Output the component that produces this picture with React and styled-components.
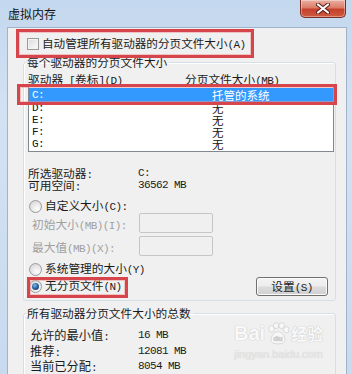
import React from "react";
import styled, { createGlobalStyle } from "styled-components";

const drives = [
  { name: "C:", size: "托管的系统", selected: true },
  { name: "D:", size: "无" },
  { name: "E:", size: "无" },
  { name: "F:", size: "无" },
  { name: "G:", size: "无" },
];

const totals = [
  { label: "允许的最小值", value: "16 MB" },
  { label: "推荐", value: "12081 MB" },
  { label: "当前已分配", value: "8054 MB" },
];

const App = () => {
  return (
    <>
      <GlobalStyle />
      <Window>
        <TitleBar>
          <Title>虚拟内存</Title>
          <CloseButton>
            <svg width="14" height="11" viewBox="0 0 14 11">
              <path d="M2 1.5 L12 9.5 M12 1.5 L2 9.5" stroke="#5a1a14" strokeWidth="4" strokeLinecap="round" />
              <path d="M2 1.5 L12 9.5 M12 1.5 L2 9.5" stroke="#fff" strokeWidth="2.2" strokeLinecap="round" />
            </svg>
          </CloseButton>
        </TitleBar>

        <Panel>
          <CheckRow>
            <CheckBox />
            <span>自动管理所有驱动器的分页文件大小<Lat>(A)</Lat></span>
          </CheckRow>

          <Group>
            <Legend>每个驱动器的分页文件大小</Legend>
            <ListHeader>
              <span>驱动器<Lat> [</Lat>卷标<Lat>](D)</Lat></span>
              <span>分页文件大小<Lat>(MB)</Lat></span>
            </ListHeader>
            <ListBox>
              {drives.map((d) => (
                <ListRow key={d.name} $selected={d.selected}>
                  <Lat>{d.name}</Lat>
                  <span>{d.size}</span>
                </ListRow>
              ))}
            </ListBox>

            <InfoBlock>
              <InfoRow>
                <span>所选驱动器<Lat>:</Lat></span>
                <Lat>C:</Lat>
              </InfoRow>
              <InfoRow>
                <span>可用空间<Lat>:</Lat></span>
                <Lat>36562 MB</Lat>
              </InfoRow>
            </InfoBlock>

            <RadioRow $top={8}>
              <Radio />
              <span>自定义大小<Lat>(C):</Lat></span>
            </RadioRow>
            <FieldRow $top={0}>
              <span>初始大小<Lat>(MB)(I):</Lat></span>
              <SizeInput disabled />
            </FieldRow>
            <FieldRow $top={3}>
              <span>最大值<Lat>(MB)(X):</Lat></span>
              <SizeInput disabled />
            </FieldRow>
            <RadioRow $top={6}>
              <Radio />
              <span>系统管理的大小<Lat>(Y)</Lat></span>
            </RadioRow>
            <LastRow>
              <Radio $checked />
              <span>无分页文件<Lat>(N)</Lat></span>
              <SetButton>设置<Lat>(S)</Lat></SetButton>
            </LastRow>
          </Group>

          <Group $top={5}>
            <Legend>所有驱动器分页文件大小的总数</Legend>
            <TotalList>
              {totals.map((t) => (
                <TotalRow key={t.label}>
                  <span>{t.label}<Lat>:</Lat></span>
                  <Lat>{t.value}</Lat>
                </TotalRow>
              ))}
            </TotalList>
          </Group>
        </Panel>

        <Mark $x={16} $y={29} $w={238} $h={29} />
        <Mark $x={17} $y={84} $w={320} $h={21} />
        <Mark $x={27} $y={277} $w={101} $h={21} />

        <Watermark>
          <WmLogo>
            <span>Bai</span>
            <svg width="24" height="23" viewBox="0 0 26 24">
              <g fill="#f7f7f7" stroke="#d6d6d6" strokeWidth="1">
                <ellipse cx="6" cy="7" rx="3" ry="3.6" />
                <ellipse cx="11" cy="3.5" rx="3" ry="3.2" />
                <ellipse cx="17" cy="3.5" rx="3" ry="3.2" />
                <ellipse cx="22" cy="8" rx="3" ry="3.4" />
                <path d="M13 10 C8 10 4 17 6 21 C8 24 18 24 20 21 C22 17 18 10 13 10 Z" />
              </g>
              <text x="13" y="20" textAnchor="middle" fontSize="8" fontWeight="bold" fill="#d0d0d0" fontFamily="Liberation Sans">du</text>
            </svg>
            <WmCjk>经验</WmCjk>
          </WmLogo>
          <WmUrl>jingyan.baidu.com</WmUrl>
        </Watermark>
      </Window>
    </>
  );
};

const GlobalStyle = createGlobalStyle`
  html, body {
    margin: 0;
    padding: 0;
  }
  body {
    width: 352px;
    height: 374px;
    overflow: hidden;
    font-family: "Noto Sans CJK SC", "Liberation Sans", sans-serif;
    font-size: 11.7px;
    color: #1b1b1b;
  }
`;

// Latin text in the dialog is the narrow half-width SimSun style
const Lat = styled.span`
  font-family: "Liberation Mono", "DejaVu Sans Mono", monospace;
  font-size: 11px;
  letter-spacing: -0.6px;
`;

// Window frame
const Window = styled.div`
  position: relative;
  width: 352px;
  height: 374px;
  display: flex;
  flex-direction: column;
  overflow: hidden;
  background: linear-gradient(180deg, #c3d7ee 0%, #d3e2f3 30%, #c8daee 100%);
`;
const TitleBar = styled.div`
  height: 27px;
  flex-shrink: 0;
  display: flex;
  align-items: flex-start;
`;
const Title = styled.div`
  padding: 6px 0 0 8px;
  font-size: 12px;
  line-height: 15px;
  color: #111;
`;
const CloseButton = styled.div`
  margin-left: auto;
  margin-right: 6px;
  width: 46px;
  height: 18px;
  box-sizing: border-box;
  border: 1px solid #7a2e26;
  border-top: none;
  border-radius: 0 0 5px 5px;
  background: linear-gradient(180deg, #eab0a2 0%, #dc7c68 45%, #c5402d 55%, #cf5a3f 100%);
  box-shadow: inset 0 0 0 1px rgba(255, 255, 255, 0.35);
  display: flex;
  align-items: center;
  justify-content: center;
`;
const Panel = styled.div`
  position: relative;
  flex: 1;
  margin: 0 5px 0 7px;
  padding: 0 10px 0 15px;
  background: #f0f0f0;
  border: 1px solid #9fb3cb;
  border-bottom: none;
  display: flex;
  flex-direction: column;
`;

// Auto manage checkbox
const CheckRow = styled.label`
  margin: 8px 0 0 4px;
  height: 16px;
  display: flex;
  align-items: center;
  gap: 3px;
  line-height: 16px;
  font-size: 11.6px;
`;
const CheckBox = styled.span`
  width: 10px;
  height: 10px;
  border: 1px solid #9a9a9a;
  background: linear-gradient(135deg, #d9d9d9 0%, #efefef 60%, #f8f8f8 100%);
  box-shadow: inset 0 0 0 1px #f4f4f4;
`;

// Group boxes
const Group = styled.fieldset`
  margin: ${(p) => p.$top || 3}px 0 0 0;
  width: 313px;
  box-sizing: border-box;
  padding: 0 1px 5px 4px;
  border: 1px solid #d5dfe5;
  border-radius: 3px;
  box-shadow: inset 1px 1px 0 #fff;
  display: flex;
  flex-direction: column;
`;
const Legend = styled.legend`
  padding: 0 2px 0 0;
  margin-left: -1px;
  line-height: 14px;
  color: #1b1b1b;
`;

// Drive list
const ListHeader = styled.div`
  margin-top: 3px;
  height: 14px;
  line-height: 14px;
  display: grid;
  grid-template-columns: 157px 1fr;
`;
const ListBox = styled.div`
  border: 1px solid #828790;
  background: #fff;
  padding: 1px 0 1px 0;
`;
const ListRow = styled.div`
  height: ${(p) => (p.$selected ? 14 : 12)}px;
  line-height: ${(p) => (p.$selected ? 14 : 12)}px;
  padding-left: 3px;
  display: grid;
  grid-template-columns: 180px 1fr;
  font-size: 11.5px;
  background: ${(p) => (p.$selected ? "#3399ff" : "transparent")};
  color: ${(p) => (p.$selected ? "#fff" : "#111")};
`;

// Selected drive info
const InfoBlock = styled.div`
  margin-top: 15px;
`;
const InfoRow = styled.div`
  height: 12px;
  line-height: 12px;
  display: grid;
  grid-template-columns: 110px 1fr;
`;

// Size options
const RadioRow = styled.label`
  margin-top: ${(p) => p.$top}px;
  height: 14px;
  padding-left: 1px;
  display: flex;
  align-items: center;
  gap: 3px;
  line-height: 14px;
`;
const Radio = styled.span`
  position: relative;
  flex-shrink: 0;
  width: 11px;
  height: 11px;
  border-radius: 50%;
  border: 1px solid #9b9b9b;
  background: radial-gradient(circle at 65% 70%, #fdfdfd 0%, #e2e2e2 60%, #cfcfcf 100%);

  &::after {
    content: "";
    display: ${(p) => (p.$checked ? "block" : "none")};
    position: absolute;
    left: 2px;
    top: 2px;
    width: 7px;
    height: 7px;
    border-radius: 50%;
    background: radial-gradient(circle at 40% 35%, #7fb8f0 0%, #2a5f9a 50%, #123459 100%);
  }
`;
const FieldRow = styled.div`
  margin-top: ${(p) => p.$top}px;
  height: 20px;
  padding-left: 4px;
  display: grid;
  grid-template-columns: 107px 74px;
  align-items: center;
  color: #a0a0a0;
`;
const SizeInput = styled.input`
  width: 74px;
  height: 20px;
  box-sizing: border-box;
  border: 1px solid #c6c6c6;
  border-radius: 2px;
  background: #f0f0f0;
  outline: none;
`;
const LastRow = styled.div`
  margin-top: 1px;
  height: 18px;
  padding-left: 1px;
  display: flex;
  align-items: center;
  gap: 3px;
  line-height: 14px;
`;
const SetButton = styled.button`
  margin-left: auto;
  margin-right: 6px;
  width: 72px;
  height: 19px;
  padding: 0;
  border: 1px solid #707070;
  border-radius: 3px;
  background: linear-gradient(180deg, #f4f4f4 0%, #ececec 48%, #dcdcdc 52%, #d0d0d0 100%);
  box-shadow: inset 0 0 0 1px #fbfbfb;
  font-family: "Noto Sans CJK SC", sans-serif;
  font-size: 11.7px;
  line-height: 16px;
  color: #1b1b1b;
`;

// Totals
const TotalList = styled.div`
  margin-top: 8px;
  padding-left: 2px;
`;
const TotalRow = styled.div`
  height: 15.5px;
  line-height: 15.5px;
  display: grid;
  grid-template-columns: 108px 1fr;
  font-size: 12.2px;
`;

// Red annotation frames drawn over the screenshot
const Mark = styled.div`
  position: absolute;
  left: ${(p) => p.$x}px;
  top: ${(p) => p.$y}px;
  width: ${(p) => p.$w}px;
  height: ${(p) => p.$h}px;
  box-sizing: border-box;
  border: 3px solid #d5454b;
  box-shadow: inset 0 0 0 1px rgba(240, 150, 150, 0.5);
  pointer-events: none;
`;

// Baidu watermark
const Watermark = styled.div`
  position: absolute;
  left: 234px;
  top: 321px;
  display: flex;
  flex-direction: column;
  align-items: center;
  white-space: nowrap;
  pointer-events: none;
`;
const WmLogo = styled.div`
  display: flex;
  align-items: center;
  gap: 1px;
  font-family: "Liberation Sans", sans-serif;
  font-weight: bold;
  font-size: 20px;
  line-height: 24px;
  color: #f9f9f9;
  text-shadow: 0 0 1px #c4c4c4, 0 0 1px #c4c4c4;
`;
const WmCjk = styled.span`
  font-family: "Noto Sans CJK SC", sans-serif;
  font-size: 16px;
  font-weight: bold;
`;
const WmUrl = styled.div`
  margin-top: 3px;
  font-family: "Liberation Sans", sans-serif;
  font-size: 11px;
  line-height: 13px;
  color: #e6e6e6;
  text-shadow: 0 0 1px #cccccc;
`;

export default App;
